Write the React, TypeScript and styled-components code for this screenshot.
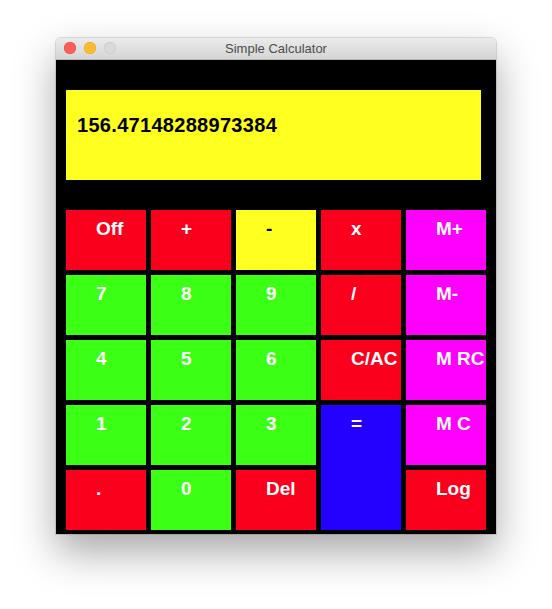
import React from 'react'
import styled, { createGlobalStyle } from 'styled-components'

const GlobalStyle = createGlobalStyle`
	html, body {
		margin: 0;
		padding: 0;
		background: #ffffff;
	}
`

const colors = {
	red: '#fb001d',
	green: '#3bff14',
	yellow: '#ffff20',
	magenta: '#ff00ff',
	blue: '#2300ff'
}

type Tone = keyof typeof colors

const keys: { label: string; tone: Tone; dark?: boolean; tall?: boolean }[] = [
	{ label: 'Off', tone: 'red' },
	{ label: '+', tone: 'red' },
	{ label: '-', tone: 'yellow', dark: true },
	{ label: 'x', tone: 'red' },
	{ label: 'M+', tone: 'magenta' },
	{ label: '7', tone: 'green' },
	{ label: '8', tone: 'green' },
	{ label: '9', tone: 'green' },
	{ label: '/', tone: 'red' },
	{ label: 'M-', tone: 'magenta' },
	{ label: '4', tone: 'green' },
	{ label: '5', tone: 'green' },
	{ label: '6', tone: 'green' },
	{ label: 'C/AC', tone: 'red' },
	{ label: 'M RC', tone: 'magenta' },
	{ label: '1', tone: 'green' },
	{ label: '2', tone: 'green' },
	{ label: '3', tone: 'green' },
	{ label: '=', tone: 'blue', tall: true },
	{ label: 'M C', tone: 'magenta' },
	{ label: '.', tone: 'red' },
	{ label: '0', tone: 'green' },
	{ label: 'Del', tone: 'red' },
	{ label: 'Log', tone: 'red' }
]

export default function App() {
	return (
		<>
			<GlobalStyle />
			<Page>
				<Window>
					<TitleBar>
						<Lights>
							<Light $color="#fc5f57" $border="#de4a41" />
							<Light $color="#fdbc2e" $border="#dea123" />
							<Light $color="#d9d9d9" $border="#c4c4c4" />
						</Lights>
						<Title>Simple Calculator</Title>
					</TitleBar>
					<Body>
						<Display>156.47148288973384</Display>
						<Keypad>
							{keys.map(k => (
								<Key
									key={k.label}
									$tone={k.tone}
									$dark={k.dark}
									$tall={k.tall}
								>
									{k.label}
								</Key>
							))}
						</Keypad>
					</Body>
				</Window>
			</Page>
		</>
	)
}

const Page = styled.div`
	padding: 38px 0 0 56px;
	height: 571px;
`

const Window = styled.div`
	width: 440px;
	border-radius: 5px 5px 0 0;
	overflow: hidden;
	box-shadow: 0 0 0 1px rgba(0, 0, 0, 0.12), 0 18px 40px rgba(0, 0, 0, 0.35);
`

const TitleBar = styled.div`
	position: relative;
	height: 22px;
	display: flex;
	align-items: center;
	justify-content: center;
	background: linear-gradient(#ebebeb, #d5d5d5);
	border-bottom: 1px solid #b8b8b8;
	box-sizing: border-box;
`

const Lights = styled.div`
	position: absolute;
	left: 8px;
	top: 4px;
	display: flex;
	gap: 8px;
`

const Light = styled.span<{ $color: string; $border: string }>`
	width: 12px;
	height: 12px;
	border-radius: 50%;
	background: ${p => p.$color};
	box-shadow: inset 0 0 0 0.5px ${p => p.$border};
`

const Title = styled.span`
	font-family: 'Liberation Sans', Arial, sans-serif;
	font-size: 13px;
	color: #4c4c4c;
`

const Body = styled.div`
	background: #000;
	padding: 30px 10px 4px 10px;
`

const Display = styled.div`
	width: 415px;
	height: 90px;
	box-sizing: border-box;
	background: ${colors.yellow};
	padding: 24px 0 0 11px;
	font-family: 'Liberation Sans', Arial, sans-serif;
	font-weight: bold;
	font-size: 20px;
	color: #000;
	letter-spacing: 0.3px;
`

const Keypad = styled.div`
	margin-top: 30px;
	display: grid;
	grid-template-columns: repeat(5, 80px);
	grid-auto-rows: 60px;
	gap: 5px;
`

const Key = styled.div<{ $tone: Tone; $dark?: boolean; $tall?: boolean }>`
	grid-row: ${p => (p.$tall ? 'span 2' : 'auto')};
	background: ${p => colors[p.$tone]};
	color: ${p => (p.$dark ? '#000' : '#fff')};
	font-family: 'Liberation Sans', Arial, sans-serif;
	font-weight: bold;
	font-size: 19px;
	padding: 8px 0 0 30px;
	box-sizing: border-box;
	overflow: hidden;
	white-space: nowrap;
`
